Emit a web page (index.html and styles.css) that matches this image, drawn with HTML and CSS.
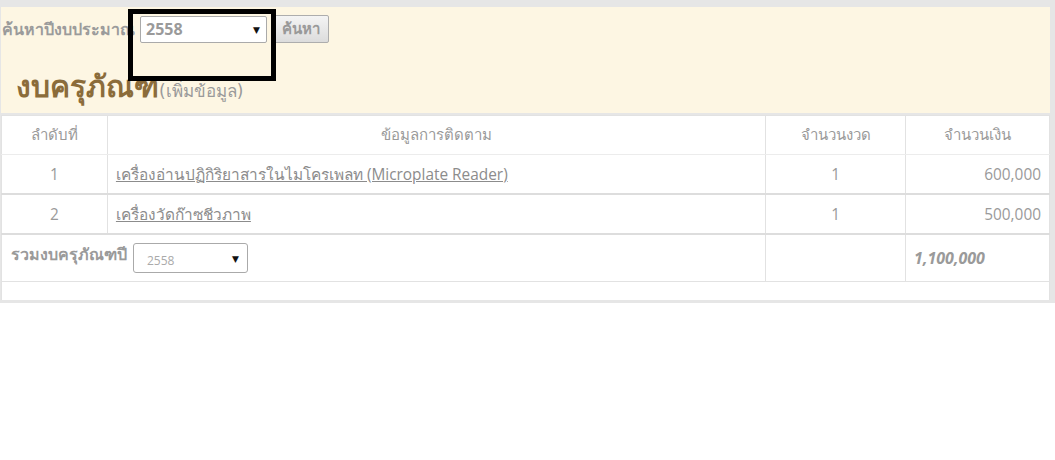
FILE: index.html
```html
<!DOCTYPE html>
<html lang="th">
<head>
<meta charset="utf-8">
<title>งบครุภัณฑ</title>
<link rel="stylesheet" href="styles.css">
</head>
<body>
<div class="frame">
  <div class="panel">
    <form class="search">
      <label class="search-label">ค้นหาปีงบประมาณ</label>
      <div class="select big"><span>2558</span><i class="caret">▼</i></div>
      <button type="button" class="btn">ค้นหา</button>
    </form>
    <h1 class="title">งบครุภัณฑ<small>(เพิ่มข้อมูล)</small></h1>
    <div class="mark"></div>
  </div>
  <table class="grid">
    <colgroup>
      <col class="c1"><col class="c2"><col class="c3"><col class="c4">
    </colgroup>
    <thead>
      <tr><th>ลำดับที่</th><th>ข้อมูลการติดตาม</th><th>จำนวนงวด</th><th>จำนวนเงิน</th></tr>
    </thead>
    <tbody>
      <tr><td class="center">1</td><td><a href="#">เครื่องอ่านปฏิกิริยาสารในไมโครเพลท (Microplate Reader)</a></td><td class="center">1</td><td class="right">600,000</td></tr>
      <tr><td class="center">2</td><td><a href="#">เครื่องวัดก๊าซชีวภาพ</a></td><td class="center">1</td><td class="right">500,000</td></tr>
      <tr class="sum"><td colspan="2"><div class="sum-cell"><span class="sum-label">รวมงบครุภัณฑปี</span><div class="select small"><span>2558</span><i class="caret">▼</i></div></div></td><td></td><td class="total">1,100,000</td></tr>
      <tr class="empty"><td colspan="4"></td></tr>
    </tbody>
  </table>
</div>
</body>
</html>
```

FILE: styles.css
```css
html, body {
  margin: 0;
  padding: 0;
  background: #ffffff;
}
body {
  font-family: "Open Sans", "Noto Sans", "DejaVu Sans", sans-serif;
  color: #999999;
}
.frame {
  width: 1049px;
  background: #e6e6e6;
  padding: 7px 5px 3px 1px;
}
.panel {
  position: relative;
  background: #fdf6e3;
  height: 106px;
  border-bottom: 2px solid #e6e6e6;
}
.search {
  display: flex;
  align-items: center;
  gap: 5px;
  padding: 8px 0 0 0;
  height: 28px;
}
.search-label {
  font-family: "DejaVu Sans", "Noto Sans", sans-serif;
  font-weight: bold;
  font-size: 16px;
  color: #9b9b9b;
  width: 134px;
  white-space: nowrap;
  overflow: hidden;
  padding-left: 1px;
  box-sizing: border-box;
}
.select {
  display: flex;
  align-items: center;
  justify-content: space-between;
  background: #ffffff;
  border: 1px solid #aaaaaa;
  border-radius: 2px;
  box-sizing: border-box;
}
.select.big {
  width: 127px;
  height: 27px;
  padding: 0 6px 0 5px;
  font-weight: bold;
  font-size: 16px;
  color: #9a9a9a;
}
.caret {
  font-style: normal;
  font-size: 9px;
  color: #111;
}
.btn {
  height: 28px;
  width: 57px;
  border: 1px solid #adadad;
  border-radius: 2px;
  background: linear-gradient(#f4f4f4, #dcdcdc);
  font-family: "DejaVu Sans", "Noto Sans", sans-serif;
  font-weight: bold;
  font-size: 15px;
  color: #999;
  padding: 0;
}
.title {
  margin: 25px 0 0 15px;
  font-family: "DejaVu Sans", "Noto Sans", sans-serif;
  font-size: 30px;
  font-weight: bold;
  color: #8b6c3a;
  line-height: 38px;
}
.title small {
  font-size: 17px;
  font-weight: normal;
  color: #9a9a9a;
}
.mark {
  position: absolute;
  left: 127px;
  top: 2px;
  width: 138px;
  height: 62px;
  border: 5px solid #000;
}
.grid {
  width: 1049px;
  border-collapse: collapse;
  background: #ffffff;
  font-size: 15.4px;
  color: #9a9a9a;
}
.c1 { width: 106px; }
.c2 { width: 659px; }
.c3 { width: 140px; }
.c4 { width: 144px; }
.grid th {
  font-weight: normal;
  font-size: 15px;
  height: 38px;
  padding: 0 8px;
  border: 1px solid #e2e2e2;
  border-bottom: 1px solid #ececec;
  text-align: center;
}
.grid td {
  height: 38px;
  padding: 0 8px;
  border-left: 1px solid #e2e2e2;
  border-right: 1px solid #e2e2e2;
  border-top: 2px solid #dddddd;
}
.grid tbody tr:first-child td {
  border-top: 1px solid #ececec;
}
.grid a {
  color: #8c8c8c;
  text-decoration: underline;
}
.center { text-align: center; }
.right { text-align: right; }
.sum td {
  height: 46px;
  border-bottom: 1px solid #e2e2e2;
}
.sum-cell {
  display: flex;
  align-items: center;
  gap: 6px;
  padding-left: 1px;
}
.sum-label {
  font-family: "DejaVu Sans", "Noto Sans", sans-serif;
  font-weight: bold;
  font-size: 16px;
  color: #9a9a9a;
  margin-top: -7px;
}
.select.small {
  width: 115px;
  height: 30px;
  padding: 4px 8px 0 13px;
  font-size: 12px;
  color: #aaa;
  border-radius: 3px;
}
.select.small .caret { margin-top: -4px; }
.total {
  font-weight: bold;
  font-style: italic;
  color: #9a9a9a;
  font-size: 16px;
}
.empty td {
  height: 18px;
  border-top: 1px solid #e2e2e2;
}
```
